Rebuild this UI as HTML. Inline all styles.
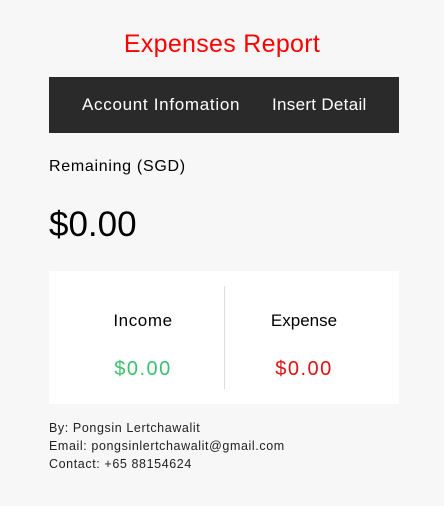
<!DOCTYPE html>
<html><head><style>
*{margin:0;padding:0;box-sizing:border-box}
body{width:444px;height:506px;background:#f7f7f7;font-family:"Liberation Sans",sans-serif;color:#000;position:relative;overflow:hidden}
.a{position:absolute;white-space:nowrap}
</style></head><body>
<div class="a" style="left:0;width:444px;top:29px;text-align:center;color:#f00;font-size:25px;line-height:30px;letter-spacing:0.3px">Expenses Report</div>
<div class="a" style="left:49px;top:77px;width:350px;height:56px;background:#2b2a2a"></div>
<div class="a" style="left:82px;top:95px;color:#fff;font-size:17px;line-height:20px;letter-spacing:0.7px">Account Infomation</div>
<div class="a" style="left:272px;top:95px;color:#fff;font-size:17px;line-height:20px;letter-spacing:0.3px">Insert Detail</div>
<div class="a" style="left:49px;top:157px;font-size:16px;line-height:20px;letter-spacing:0.7px">Remaining (SGD)</div>
<div class="a" style="left:49px;top:205px;font-size:35px;line-height:40px">$0.00</div>
<div class="a" style="left:49px;top:271px;width:350px;height:133px;background:#fff"></div>
<div class="a" style="left:224px;top:286px;width:1px;height:103px;background:#ddd"></div>
<div class="a" style="left:49px;width:188px;top:311px;text-align:center;font-size:17px;line-height:20px;letter-spacing:0.6px">Income</div>
<div class="a" style="left:210px;width:188px;top:311px;text-align:center;font-size:17px;line-height:20px">Expense</div>
<div class="a" style="left:49px;width:188px;top:357px;text-align:center;font-size:20px;line-height:24px;letter-spacing:1.5px;color:#3cbf6e">$0.00</div>
<div class="a" style="left:210px;width:188px;top:357px;text-align:center;font-size:20px;line-height:24px;letter-spacing:1.5px;color:#e01010">$0.00</div>
<div class="a" style="left:49px;top:419px;font-size:12.5px;line-height:18px;color:#222;letter-spacing:0.6px">By: Pongsin Lertchawalit<br>Email: pongsinlertchawalit@gmail.com<br>Contact: +65 88154624</div>
</body></html>
